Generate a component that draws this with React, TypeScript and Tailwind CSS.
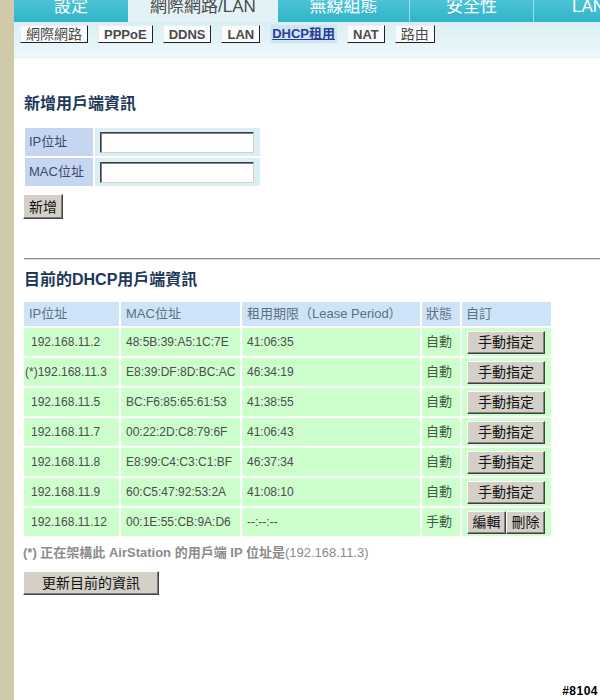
import React from "react";

const tabs = [
  { label: "設定", w: "w-[114px]", active: false },
  { label: "網際網路/LAN", w: "w-[150px]", active: true },
  { label: "無線組態", w: "w-[131px]", active: false },
  { label: "安全性", w: "w-[124px]", active: false },
  { label: "LAN", w: "w-[110px]", active: false },
];

const subTabs = [
  { label: "網際網路", cjk: true },
  { label: "PPPoE", cjk: false },
  { label: "DDNS", cjk: false },
  { label: "LAN", cjk: false },
  { label: "DHCP租用", cjk: false, active: true },
  { label: "NAT", cjk: false },
  { label: "路由", cjk: true },
];

const leases = [
  { ip: "192.168.11.2", mac: "48:5B:39:A5:1C:7E", period: "41:06:35", status: "自動" },
  { ip: "(*)192.168.11.3", mac: "E8:39:DF:8D:BC:AC", period: "46:34:19", status: "自動" },
  { ip: "192.168.11.5", mac: "BC:F6:85:65:61:53", period: "41:38:55", status: "自動" },
  { ip: "192.168.11.7", mac: "00:22:2D:C8:79:6F", period: "41:06:43", status: "自動" },
  { ip: "192.168.11.8", mac: "E8:99:C4:C3:C1:BF", period: "46:37:34", status: "自動" },
  { ip: "192.168.11.9", mac: "60:C5:47:92:53:2A", period: "41:08:10", status: "自動" },
  { ip: "192.168.11.12", mac: "00:1E:55:CB:9A:D6", period: "--:--:--", status: "手動" },
];

const btn =
  "bg-[#d4d0c8] text-[14px] text-[#111] leading-none border border-t-white border-l-white border-r-[#404040] border-b-[#404040] shadow-[inset_-1px_-1px_0_#808080]";

function WinButton({ children, className = "" }: { children: React.ReactNode; className?: string }) {
  return <button className={`${btn} ${className}`}>{children}</button>;
}

function TextInput() {
  return (
    <input
      type="text"
      className="w-[154px] h-[21px] bg-white border border-t-[#404040] border-l-[#404040] border-r-[#d4d0c8] border-b-[#d4d0c8] shadow-[inset_1px_1px_0_#808080] outline-none"
    />
  );
}

export default function App() {
  return (
    <div className="relative flex h-[700px] overflow-hidden bg-white font-['Liberation_Sans','Noto_Sans_CJK_TC',sans-serif]">
      <div className="w-[14px] shrink-0 bg-[#d0c9aa]" />
      <div className="flex-1 min-w-0">
        {/* Top tabs */}
        <div className="flex h-[22px] overflow-hidden">
          {tabs.map((t, i) => (
            <div
              key={t.label}
              className={`${t.w} shrink-0 h-[22px] flex justify-center overflow-hidden ${
                t.active
                  ? "bg-[#e3f2f6] text-[#4a4a4a]"
                  : "bg-gradient-to-b from-[#4cc4d6] to-[#30b3c8] text-white"
              } ${!t.active && i > 2 ? "border-l border-[#9fdde6]" : ""}`}
            >
              <span className="text-[17px] leading-[17px] -mt-[2px] whitespace-nowrap">{t.label}</span>
            </div>
          ))}
        </div>

        {/* Sub navigation */}
        <div className="h-[36px] bg-gradient-to-b from-[#d9eff5] to-[#eef8fa] border-b border-[#e2eff3] pl-[6px] pt-[3px]">
          <div className="flex items-start gap-[10px]">
            {subTabs.map((s) =>
              s.active ? (
                <span
                  key={s.label}
                  className="h-[18px] px-[2px] bg-[#cde6f1] text-[13px] font-bold leading-[18px] text-[#2b3d9c] underline"
                >
                  {s.label}
                </span>
              ) : (
                <span
                  key={s.label}
                  className={`h-[18px] px-[5px] bg-[#fafcfc] border-l border-t border-[#e8eeee] border-r border-r-[#222] border-b border-b-[#222] text-[#4a4a4a] leading-[17px] ${
                    s.cjk ? "text-[14px]" : "text-[13px] font-bold"
                  }`}
                >
                  {s.label}
                </span>
              )
            )}
          </div>
        </div>

        {/* Content */}
        <div className="pl-[10px]">
          <h2 className="mt-[36px] text-[16px] leading-[20px] font-bold text-[#21385a]">新增用戶端資訊</h2>

          <table className="mt-[12px] -ml-[1px] border-separate border-spacing-[2px] text-[13px]">
            <tbody>
              {["IP位址", "MAC位址"].map((label) => (
                <tr key={label}>
                  <td className="w-[68px] h-[28px] bg-[#c6d6f0] pl-[4px] text-[#3a4870]">{label}</td>
                  <td className="w-[165px] h-[28px] bg-[#d9eef5] pl-[5px]">
                    <TextInput />
                  </td>
                </tr>
              ))}
            </tbody>
          </table>

          <WinButton className="mt-[6px] -ml-[1px] w-[40px] h-[25px]">新增</WinButton>

          <div className="mt-[39px] h-[2px] border-t border-[#8c8c8c] border-b border-b-[#dcdcdc]" />

          <h2 className="mt-[10px] text-[16px] leading-[20px] font-bold text-[#21385a]">目前的DHCP用戶端資訊</h2>

          <table className="mt-[10px] -ml-[2px] border-separate border-spacing-[2px] text-[12px] text-[#4d4d4d]">
            <thead>
              <tr className="bg-[#cde3f7] text-left text-[#5f6f80] text-[13px] font-normal">
                <th className="w-[95px] h-[24px] pl-[5px] font-normal">IP位址</th>
                <th className="w-[119px] h-[24px] pl-[5px] font-normal">MAC位址</th>
                <th className="w-[178px] h-[24px] pl-[5px] font-normal">租用期限（Lease Period）</th>
                <th className="w-[38px] h-[24px] pl-[4px] font-normal">狀態</th>
                <th className="w-[89px] h-[24px] pl-[4px] font-normal">自訂</th>
              </tr>
            </thead>
            <tbody>
              {leases.map((r) => (
                <tr key={r.ip} className="bg-[#ccffcc]">
                  <td className={`h-[28px] ${r.ip.startsWith("(*)") ? "pl-[1px]" : "pl-[7px]"}`}>{r.ip}</td>
                  <td className="h-[28px] pl-[5px]">{r.mac}</td>
                  <td className="h-[28px] pl-[5px]">{r.period}</td>
                  <td className="h-[28px] pl-[4px] text-[13px] text-[#3f5c3f]">{r.status}</td>
                  <td className="h-[28px] pl-[5px]">
                    {r.status === "自動" ? (
                      <WinButton className="w-[78px] h-[23px]">手動指定</WinButton>
                    ) : (
                      <div className="flex">
                        <WinButton className="w-[39px] h-[23px]">編輯</WinButton>
                        <WinButton className="w-[39px] h-[23px]">刪除</WinButton>
                      </div>
                    )}
                  </td>
                </tr>
              ))}
            </tbody>
          </table>

          <p className="mt-[6px] -ml-[1px] text-[13px] leading-[18px] text-[#8c8c8c]">
            <span className="font-bold">(*) 正在架構此 AirStation 的用戶端 IP 位址是</span>(192.168.11.3)
          </p>

          <WinButton className="mt-[9px] -ml-[1px] w-[136px] h-[24px]">更新目前的資訊</WinButton>
        </div>
      </div>

      <span className="absolute right-[2px] bottom-[3px] text-[12px] tracking-[0.5px] font-bold leading-none text-black [text-shadow:0_0_1px_#fff,0_0_1px_#fff]">
        #8104
      </span>
    </div>
  );
}
